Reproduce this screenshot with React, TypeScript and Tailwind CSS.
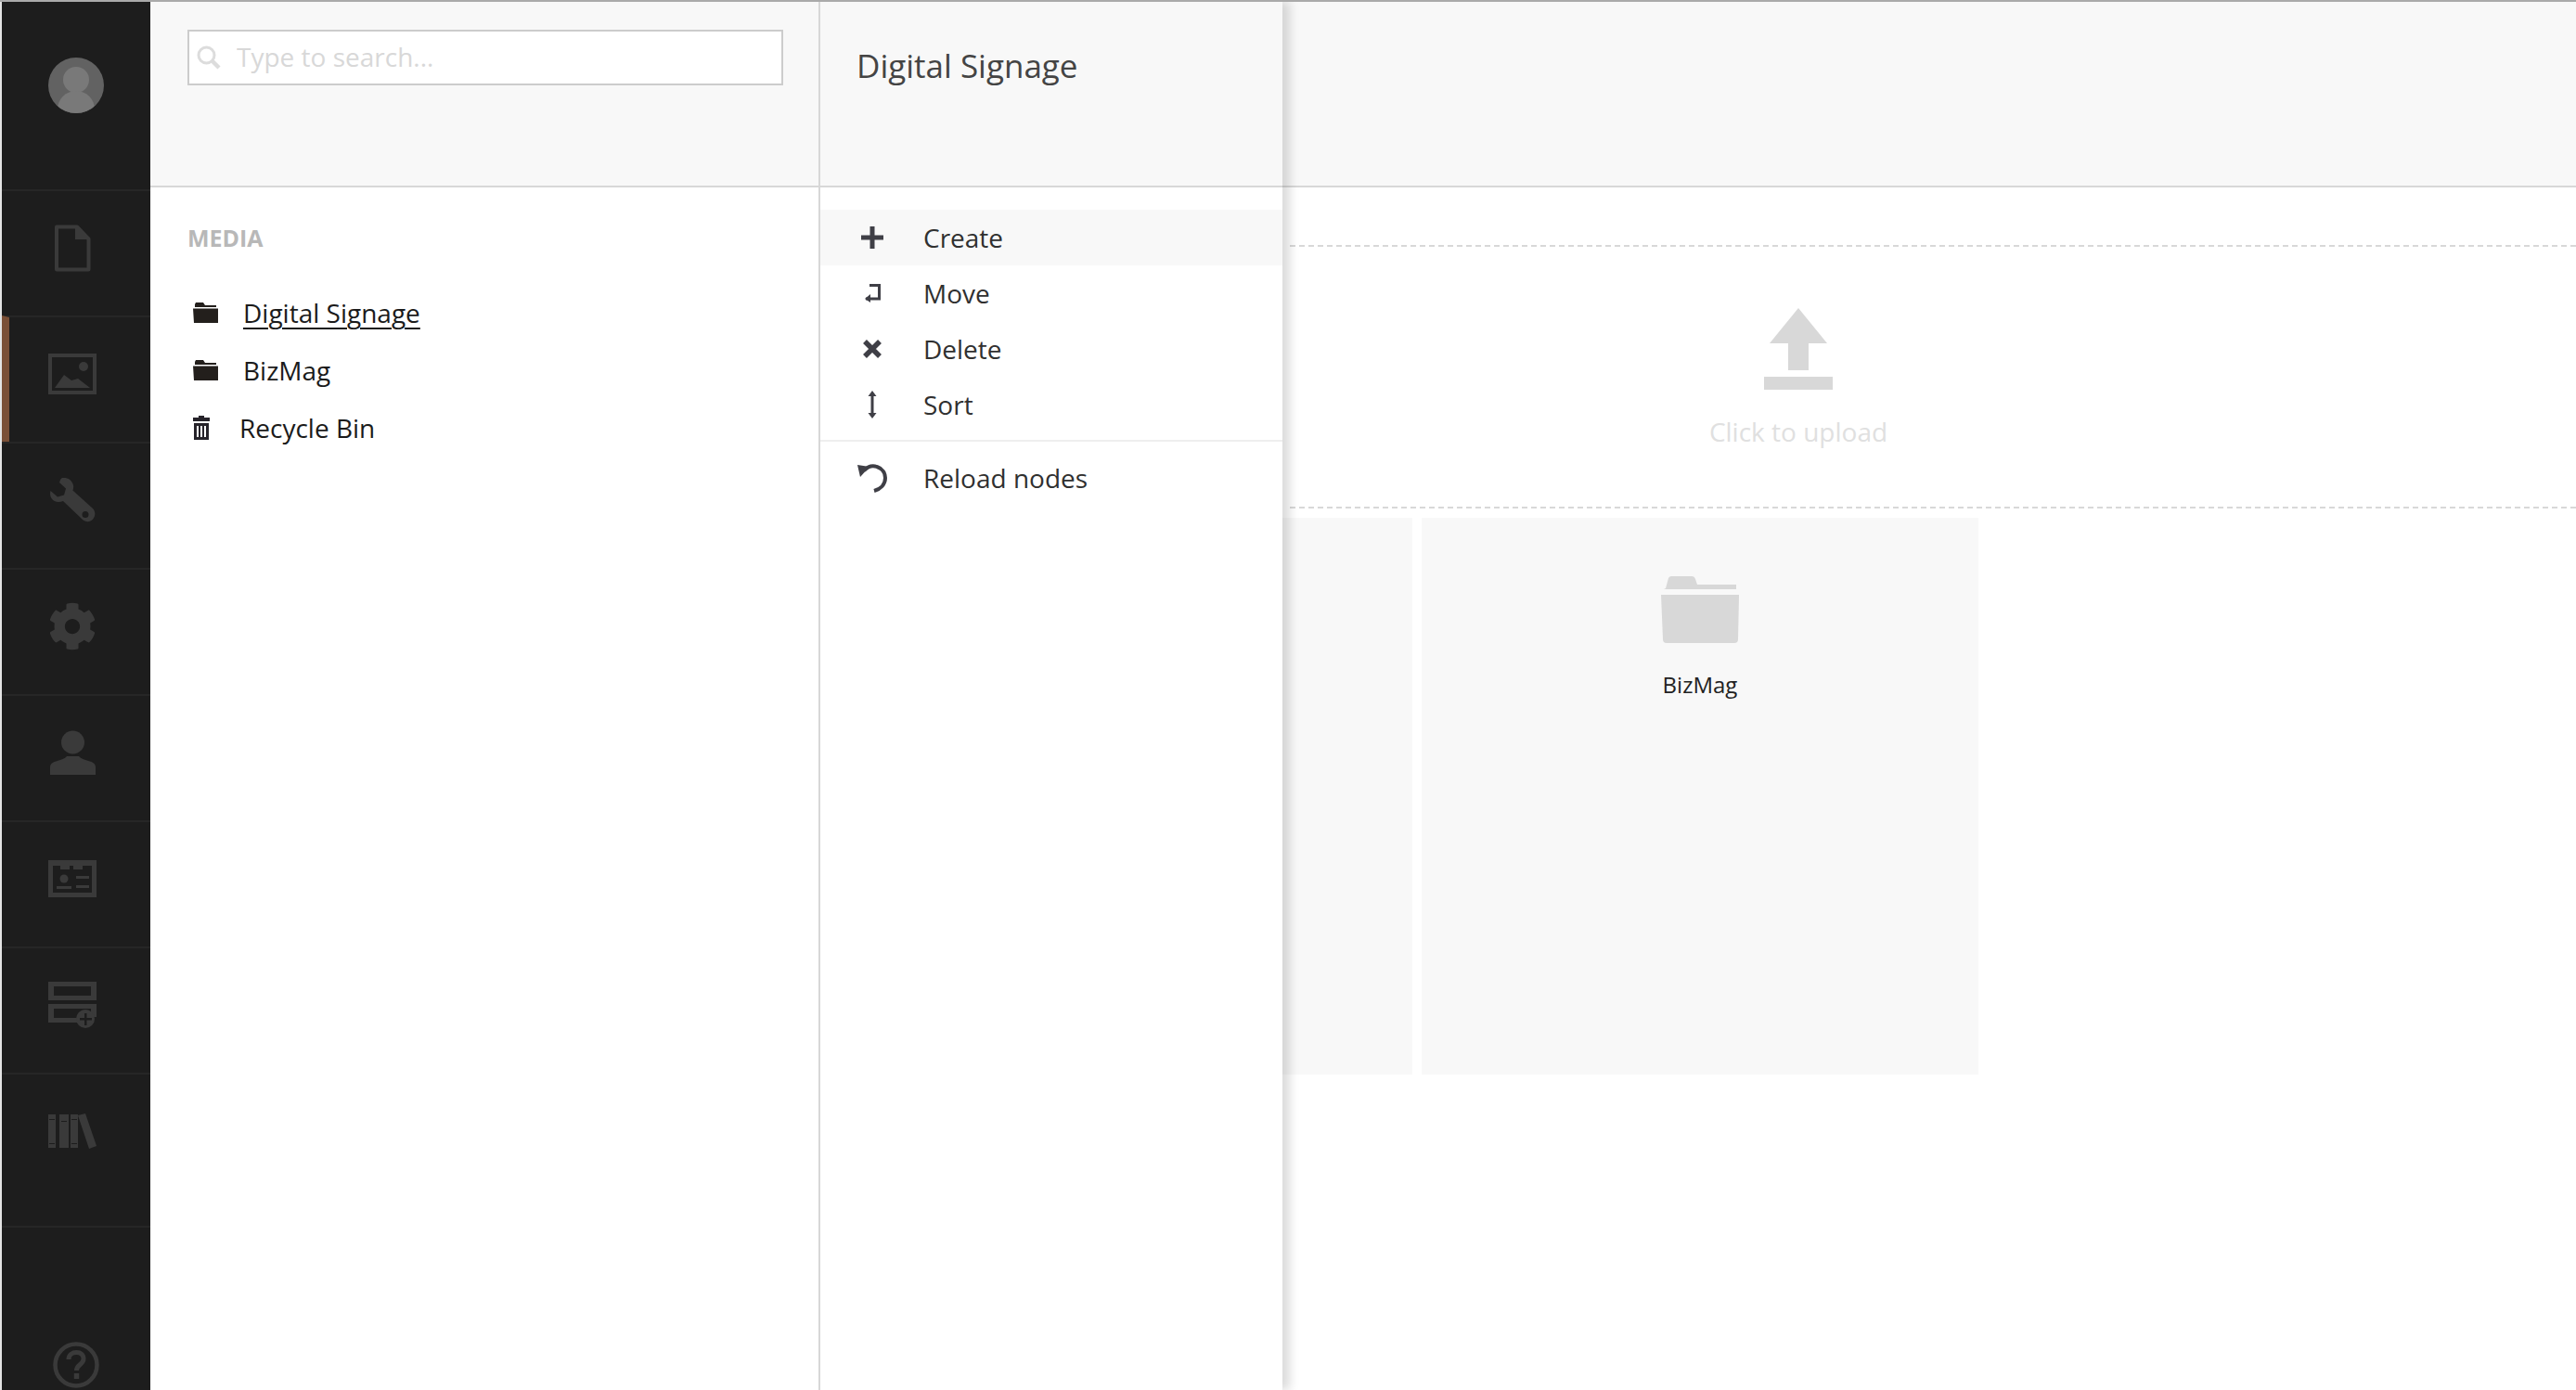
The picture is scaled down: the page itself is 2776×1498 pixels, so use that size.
import type { ReactNode } from 'react'
import { FaCog } from 'react-icons/fa'

const FONT = 'font-["Open_Sans",sans-serif]'

function FolderSmall() {
  return (
    <svg width="27" height="22" viewBox="0 0 27 22" fill="#231f1c">
      <path d="M3 0h8l2 3h12v2H2V2z" />
      <path d="M0 6.500h27V22H1z" />
    </svg>
  )
}

function TrashSmall() {
  return (
    <svg width="20" height="26" viewBox="0 0 20 26" fill="#26232a">
      <path d="M7 0h6v2h6v4H1V2h6z" />
      <path fillRule="evenodd" d="M2 8h16v18H2zM5 11v12h2V11zM9 11v12h2V11zM13 11v12h2V11z" />
    </svg>
  )
}

const NAV_ICONS: ReactNode[] = [
  <svg key="doc" width="40" height="51" viewBox="0 0 40 51" fill="none" stroke="#3a3a3a" strokeWidth="4">
    <path d="M3 2.500h22l12.500 13V48.500H3z" strokeLinejoin="round" />
    <path d="M23 2v14h14z" fill="#3a3a3a" stroke="none" />
  </svg>,
  <svg key="image" width="52" height="44" viewBox="0 0 52 44">
    <rect x="2" y="2" width="48" height="40" fill="none" stroke="#3a3a3a" strokeWidth="4" />
    <circle cx="38" cy="14" r="5" fill="#3a3a3a" />
    <path d="M7 37l10-14 8 6 7-2 13 10z" fill="#3a3a3a" />
  </svg>,
  <svg key="wrench" width="49" height="48" viewBox="0 0 49 48" fill="#3a3a3a">
    <path
      fillRule="evenodd"
      d="M13 0c6-1 11 3 12 8 .4 2 0 4-.6 5.500L46 33c3 3 3 8 .5 11-3 4-8 4-11.500 1L14 25c-5 2-10 1-12.500-3C0 20-.3 17 .5 14l7.500 6.500 7-2 2-7L10 5c.8-2.500 1.500-4.500 3-5zM38 36a3.500 3.500 0 100 7 3.500 3.500 0 000-7z"
    />
  </svg>,
  <FaCog key="gear" size={52} color="#3a3a3a" />,
  <svg key="user" width="49" height="48" viewBox="0 0 49 48" fill="#3a3a3a">
    <circle cx="24.500" cy="13" r="12.500" />
    <path d="M0 48v-8c0-5 4-6 11-8 4-1 6-3 7-4h13c1 1 3 3 7 4 7 2 11 3 11 8v8z" />
  </svg>,
  <svg key="card" width="52" height="40" viewBox="0 0 52 40" fill="#3a3a3a">
    <path fillRule="evenodd" d="M0 0h52v40H0zM5 6v29h42V6H37v4H27V6H23v4H13V6z" />
    <circle cx="17" cy="20" r="4.500" />
    <path d="M9 28h16v3H9zM30 17h14v3H30zM30 27h14v3H30z" />
  </svg>,
  <svg key="rows" width="52" height="50" viewBox="0 0 52 50" fill="#3a3a3a">
    <path fillRule="evenodd" d="M0 0h52v20H0zM6 5v10h40V5z" />
    <path fillRule="evenodd" d="M0 24h52v14H32v6H0zM6 29v10h26v-4h14v-6z" />
    <circle cx="40" cy="40" r="10" />
    <path d="M39 34h2.500v5H47v2.500h-5.500V47H39v-5.500h-5V39h5z" fill="#1d1d1d" />
  </svg>,
  <svg key="books" width="52" height="38" viewBox="0 0 52 38" fill="#3a3a3a">
    <path d="M0 1h8v36H0zM12 1h10v36H12zM24 1h8v36h-8z" />
    <path d="M32 2l8-2 12 35-8 3z" />
    <path d="M1 6h6v1H1zM1 32h6v1H1zM14 8h6v1h-6zM25 6h6v1h-6zM25 32h6v1h-6z" fill="#1d1d1d" />
  </svg>,
]

const TREE = [
  { label: 'Digital Signage', active: true },
  { label: 'BizMag', active: false },
]

const ACTIONS: { label: string; icon: ReactNode; hover?: boolean }[] = [
  {
    label: 'Create',
    hover: true,
    icon: (
      <svg width="24" height="24" viewBox="0 0 24 24" fill="#3f3f46">
        <path d="M9.500 0h5v9.500H24v5h-9.500V24h-5v-9.500H0v-5h9.500z" />
      </svg>
    ),
  },
  {
    label: 'Move',
    icon: (
      <svg width="18" height="20" viewBox="0 0 18 20" fill="none" stroke="#3f3f46" strokeWidth="3">
        <path d="M6 1.500h10.500V16H2" />
        <path d="M7 11l-6 5 6 4z" fill="#3f3f46" stroke="none" />
      </svg>
    ),
  },
  {
    label: 'Delete',
    icon: (
      <svg width="20" height="20" viewBox="0 0 20 20" fill="none" stroke="#3f3f46" strokeWidth="5.500">
        <path d="M2 2l16 16M18 2L2 18" />
      </svg>
    ),
  },
  {
    label: 'Sort',
    icon: (
      <svg width="10" height="30" viewBox="0 0 10 30" fill="#3f3f46">
        <path d="M5 0l4.500 6H6.500v18h3L5 30 .5 24h3V6h-3z" />
      </svg>
    ),
  },
]

function Sidebar() {
  return (
    <aside className="flex w-[160px] shrink-0 flex-col bg-[#1d1d1d]">
      <div className="flex h-[202px] shrink-0 justify-center pt-[60px]">
        <div className="relative h-[60px] w-[60px] overflow-hidden rounded-full bg-[#626262]">
          <span className="absolute left-[16px] top-[10px] h-[28px] w-[28px] rounded-full bg-[#797979]" />
          <span className="absolute left-[10px] top-[36px] h-[40px] w-[40px] rounded-full bg-[#797979]" />
        </div>
      </div>
      {NAV_ICONS.map((icon, i) => (
        <div
          key={i}
          className={
            i === 7
              ? 'flex h-[164px] shrink-0 justify-center border-t-2 border-[#262626] pr-2 pt-[42px]'
              : i === 1
                ? 'flex h-[136px] shrink-0 items-center justify-center border-t-2 border-[#262626] border-l-8 border-l-[#7a4f36] pb-[12px] pr-4'
                : 'flex h-[136px] shrink-0 items-center justify-center border-t-2 border-[#262626] pb-[12px] pr-2'
          }
        >
          {icon}
        </div>
      ))}
      <div className="mt-auto flex justify-center border-t-2 border-[#262626] pb-[2px] pt-[123px]">
        <svg width="50" height="50" viewBox="0 0 50 50" fill="none" stroke="#3a3a3a" strokeWidth="4.500">
          <circle cx="25" cy="25" r="22.500" />
          <path d="M17 19c0-5 4-7.500 8.500-7.500S33 14 33 18.500c0 6-7.500 6-7.500 12.500" strokeWidth="5" />
          <path d="M25.500 34v6" strokeWidth="5.500" />
        </svg>
      </div>
    </aside>
  )
}

function TreePanel() {
  return (
    <section className="flex w-[722px] shrink-0 flex-col border-r-2 border-[#d8d8d8]">
      <div className="h-[200px] shrink-0 border-b-2 border-[#d8d8d8] bg-[#f8f8f8] px-10 pt-[30px]">
        <label className="flex h-[60px] w-[642px] items-center border-2 border-[#ccc] bg-white pl-[8px]">
          <svg width="26" height="26" viewBox="0 0 26 26" fill="none" stroke="#dcdcdc">
            <circle cx="10.500" cy="10.500" r="8.500" strokeWidth="3" />
            <path d="M17 17l7 7" strokeWidth="4.500" />
          </svg>
          <input
            placeholder="Type to search..."
            className="mb-[3px] ml-[17px] w-[500px] bg-transparent text-[28px] outline-none placeholder:text-[#d8d8d8]"
          />
        </label>
      </div>
      <div className="px-10">
        <h3 className="mt-[35px] text-[25px] leading-[38px] font-bold text-[#b8b8b8]">MEDIA</h3>
        <ul className="mt-[31px]">
          {TREE.map((item) => (
            <li key={item.label} className="flex h-[62px] items-center pl-[6px] text-[28px] text-[#1b1b1b]">
              <FolderSmall />
              <span className={item.active ? 'ml-[27px] underline decoration-2 underline-offset-[5px]' : 'ml-[27px]'}>
                {item.label}
              </span>
            </li>
          ))}
          <li className="flex h-[62px] items-center pl-[5px] text-[28px] text-[#1b1b1b]">
            <TrashSmall />
            <span className="ml-[31px]">Recycle Bin</span>
          </li>
        </ul>
      </div>
    </section>
  )
}

function ActionsPanel() {
  return (
    <section className="relative z-10 flex w-[498px] shrink-0 flex-col bg-white shadow-[8px_0_10px_rgba(0,0,0,0.14)]">
      <div className="h-[200px] shrink-0 border-b-2 border-[#d8d8d8] bg-[#f8f8f8] pl-[39px] pt-[44px]">
        <h1 className="text-[35px] leading-[50px] text-[#444]">Digital Signage</h1>
      </div>
      <ul className="pt-[24px]">
        {ACTIONS.map((a) => (
          <li
            key={a.label}
            className={
              a.hover
                ? 'flex h-[60px] items-center bg-[#f8f8f8] text-[28px] text-[#303030]'
                : 'flex h-[60px] items-center text-[28px] text-[#303030]'
            }
          >
            <span className="flex w-[111px] justify-center">{a.icon}</span>
            <span>{a.label}</span>
          </li>
        ))}
        <li className="mt-[8px] flex h-[80px] items-center border-t-2 border-[#eee] text-[28px] text-[#303030]">
          <span className="flex w-[111px] justify-center">
            <svg width="34" height="34" viewBox="0 0 34 34" fill="none" stroke="#3f3f46" strokeWidth="4">
              <path d="M8 9c4-4 9-6 14-4 6 2 9 7 9 12 0 7-5 12-12 14" />
              <path d="M1 3l13 2-10 11z" fill="#3f3f46" stroke="none" />
            </svg>
          </span>
          <span>Reload nodes</span>
        </li>
      </ul>
    </section>
  )
}

function MainArea() {
  return (
    <main className="min-w-0 flex-1">
      <div className="h-[200px] border-b-2 border-[#d8d8d8] bg-[#f8f8f8]" />
      <div className="ml-2 mt-[62px] flex h-[284px] flex-col items-center border-y-2 border-dashed border-[#d8d8d8] pr-[290px] pt-[66px]">
        <svg width="74" height="88" viewBox="0 0 74 88" fill="#d8d8d8" className="block">
          <path d="M37 0l31 38H48v29H26V38H6z" />
          <path d="M0 74h74v14H0z" />
        </svg>
        <p className="mt-[26px] text-[28px] leading-[38px] text-[#e0e0e0]">Click to upload</p>
      </div>
      <div className="mt-[10px] flex gap-[10px]">
        <div className="h-[600px] w-[140px] bg-[#f8f8f8]" />
        <div className="flex h-[600px] w-[600px] flex-col items-center bg-[#f8f8f8] pt-[63px]">
          <svg width="84" height="72" viewBox="0 0 84 72" fill="#d8d8d8">
            <path d="M5 13l3-11q1-2 3-2h22q3 0 4 3l2 6h42v5H3z" />
            <path d="M0 20h84v2l-1 46q0 4-4 4H6q-4 0-4-4z" />
          </svg>
          <p className="mt-[28px] text-[24px] leading-[34px] text-[#222]">BizMag</p>
        </div>
      </div>
    </main>
  )
}

export default function App() {
  return (
    <div className={`flex h-[1498px] w-[2776px] overflow-hidden border-t-2 border-[#aaa] bg-white ${FONT}`}>
      <div className="w-[2px] shrink-0 bg-[#e4e4e4]" />
      <Sidebar />
      <TreePanel />
      <ActionsPanel />
      <MainArea />
    </div>
  )
}
